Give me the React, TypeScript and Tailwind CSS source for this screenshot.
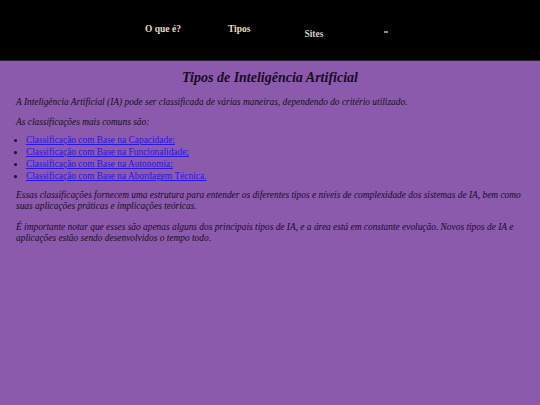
export default function App() {
  const serif = { fontFamily: '"Liberation Serif", Georgia, serif' };
  const links = [
    "Classificação com Base na Capacidade;",
    "Classificação com Base na Funcionalidade;",
    "Classificação com Base na Autonomia;",
    "Classificação com Base na Abordagem Técnica.",
  ];

  return (
    <div className="min-h-[405px] w-[540px] bg-[#8b5aad]" style={serif}>
      <header className="h-[61px] bg-black border-b border-[#2a2230]">
        <nav className="flex h-full text-[9.5px] font-bold">
          <a className="ml-[145px] mt-[22px] text-[#e8dcc6]">O que é?</a>
          <a className="ml-[47px] mt-[22px] text-[#e8dcc6]">Tipos</a>
          <a className="ml-[54px] mt-[27px] text-[#cfcfcf]">Sites</a>
          <span className="ml-[61px] mt-[31px] w-[4px] h-[2px] bg-[#888]" />
        </nav>
      </header>

      <main className="px-4 text-[9.4px] italic text-[#160c22]">
        <h1 className="mt-[6px] text-center text-[14px] font-bold">Tipos de Inteligência Artificial</h1>
        <p className="mt-[8px] leading-[12px]">
          A Inteligência Artificial (IA) pode ser classificada de várias maneiras, dependendo do critério utilizado.
        </p>
        <p className="mt-[8px] leading-[12px]">As classificações mais comuns são:</p>
        <ul className="mt-[6px] list-disc pl-[10px] not-italic leading-[12px]">
          {links.map((l) => (
            <li key={l}>
              <a href="#" className="text-[#2a14e0] underline">{l}</a>
            </li>
          ))}
        </ul>
        <p className="mt-[8px] leading-[11px]">
          Essas classificações fornecem uma estrutura para entender os diferentes tipos e níveis de complexidade dos
          sistemas de IA, bem como suas aplicações práticas e implicações teóricas.
        </p>
        <p className="mt-[10px] leading-[11px]">
          É importante notar que esses são apenas alguns dos principais tipos de IA, e a área está em constante
          evolução. Novos tipos de IA e aplicações estão sendo desenvolvidos o tempo todo.
        </p>
      </main>
    </div>
  );
}
